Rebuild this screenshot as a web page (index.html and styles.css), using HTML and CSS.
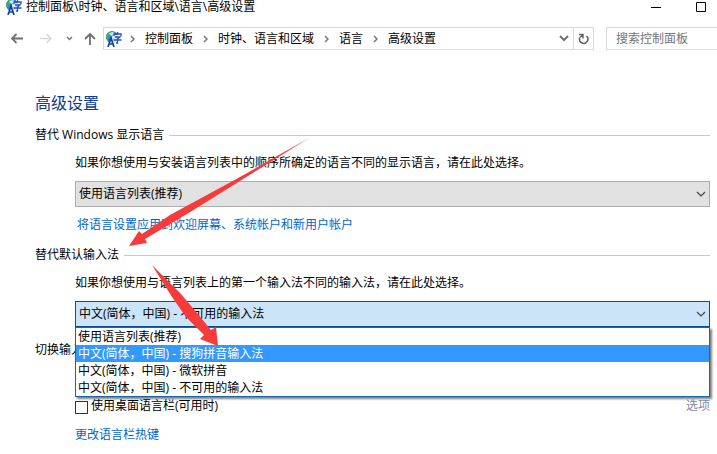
FILE: index.html
```html
<!DOCTYPE html>
<html lang="zh-CN">
<head>
<meta charset="utf-8">
<title>高级设置</title>
<link rel="stylesheet" href="styles.css">
</head>
<body>
<svg class="defs" width="0" height="0" aria-hidden="true">
  <symbol id="lang" viewBox="0 0 17 16">
    <circle cx="7" cy="6" r="6" fill="#2a86c8"/>
    <path d="M2 3 Q5 0 8 1 L7 4 L4 6 L2 9 Q0 6 2 3Z" fill="#4aa860"/>
    <path d="M4 2 L8 1 L10 3 L6 5Z" fill="#c5e8f4"/>
    <path d="M8 4 H17 V16 H3 L5 9Z" fill="#fff" opacity=".8"/>
    <path d="M3 16 L6 7 L9 16 M4 13 H8" fill="none" stroke="#183fa8" stroke-width="1.7"/>
    <path d="M12.500 1 V3 M9 5 V3 H16 V5 M10 6 H15 L12.500 8 V12 L11 12 M8.500 9 H16.500" fill="none" stroke="#2450b8" stroke-width="1.300"/>
  </symbol>
  <symbol id="down" viewBox="0 0 10 6"><path d="M1 1 L5 5 L9 1" fill="none" stroke="currentColor" stroke-width="1.200"/></symbol>
  <symbol id="right" viewBox="0 0 5 8"><path d="M1 1 L4 4 L1 7" fill="none" stroke="currentColor" stroke-width="1.500"/></symbol>
</svg>

<header class="titlebar">
  <svg class="lang"><use href="#lang"/></svg>
  <span class="caption">控制面板\时钟、语言和区域\语言\高级设置</span>
  <button class="win" aria-label="最小化"><svg width="10" height="11"><path d="M0 5.500 H10" stroke="#000"/></svg></button>
  <button class="win" aria-label="最大化"><svg width="10" height="11"><path d="M.5 .5 H9.500 V9.500 H.5Z" fill="none" stroke="#000"/></svg></button>
</header>

<nav class="toolbar">
  <div class="history">
    <button class="tool" aria-label="后退"><svg width="13" height="11"><path d="M13 5.500 H2 M6.500 1 L2 5.500 L6.500 10" fill="none" stroke="#707070" stroke-width="1.800"/></svg></button>
    <button class="tool" aria-label="前进" disabled><svg width="13" height="11"><path d="M0 5.500 H11 M6.500 1 L11 5.500 L6.500 10" fill="none" stroke="#d8d8d8" stroke-width="1.500"/></svg></button>
    <button class="tool small" aria-label="最近浏览"><svg width="7" height="5"><path d="M1 1 L3.500 3.500 L6 1" fill="none" stroke="#777" stroke-width="1.500"/></svg></button>
    <button class="tool" aria-label="上移"><svg width="12" height="13"><path d="M6 13 V2 M1 7 L6 2 L11 7" fill="none" stroke="#707070" stroke-width="1.800"/></svg></button>
  </div>
  <div class="address">
    <svg class="lang"><use href="#lang"/></svg>
    <svg class="sep"><use href="#right"/></svg><a href="#">控制面板</a>
    <svg class="sep"><use href="#right"/></svg><a href="#">时钟、语言和区域</a>
    <svg class="sep"><use href="#right"/></svg><a href="#">语言</a>
    <svg class="sep"><use href="#right"/></svg><a href="#">高级设置</a>
    <button class="drop" aria-label="历史记录"><svg width="10" height="7"><path d="M1 1 L5 5 L9 1" fill="none" stroke="#707070" stroke-width="2"/></svg></button>
    <button class="refresh" aria-label="刷新"><svg width="11" height="12"><path d="M8.500 3 A4.200 4.200 0 1 1 1.800 4.500" fill="none" stroke="#666" stroke-width="1.600"/><path d="M1 1.500 H5 V5.500 M5 1.500 L2 4.500" fill="none" stroke="#666" stroke-width="1.500"/></svg></button>
  </div>
  <input class="search" type="search" placeholder="搜索控制面板" aria-label="搜索控制面板">
</nav>

<main class="page">
  <h1>高级设置</h1>
  <section>
    <h2>替代 Windows 显示语言</h2>
    <div class="body">
      <p><label for="display">如果你想使用与安装语言列表中的顺序所确定的语言不同的显示语言，请在此处选择。</label></p>
      <div class="combo">
        <select id="display"><option>使用语言列表(推荐)</option></select>
        <svg class="arrow"><use href="#down"/></svg>
      </div>
      <a class="link apply" href="#">将语言设置应用到欢迎屏幕、系统帐户和新用户帐户</a>
    </div>
  </section>
  <section>
    <h2>替代默认输入法</h2>
    <div class="body">
      <p><label for="input">如果你想使用与语言列表上的第一个输入法不同的输入法，请在此处选择。</label></p>
      <div class="combo open">
        <select id="input"><option>中文(简体，中国) - 不可用的输入法</option></select>
        <svg class="arrow"><use href="#down"/></svg>
        <ul class="list" role="listbox" aria-label="输入法">
          <li role="option">使用语言列表(推荐)</li>
          <li role="option" class="active" aria-selected="true">中文(简体，中国) - 搜狗拼音输入法</li>
          <li role="option">中文(简体，中国) - 微软拼音</li>
          <li role="option">中文(简体，中国) - 不可用的输入法</li>
        </ul>
      </div>
    </div>
  </section>
  <section class="switching">
    <h2>切换输入</h2>
    <div class="body">
      <div class="row">
        <input type="checkbox" id="bar"><label for="bar">使用桌面语言栏(可用时)</label>
        <a class="options" href="#">选项</a>
      </div>
      <a class="link" href="#">更改语言栏热键</a>
    </div>
  </section>
</main>

<svg class="marks" width="320" height="360" aria-hidden="true">
  <path d="M309 138 L240 177 L170 215 L142 234 L139 231 L129 246 L147 243 L145 239 L187 214 L240 181Z" fill="#f73b3b"/>
  <path d="M152 265 L172 297 L186 317 L204 335 L200 339 L218 346 L216 327 L211 330 L197 313 L181 294Z" fill="#f73b3b"/>
</svg>
</body>
</html>
```
FILE: styles.css
```css
* { box-sizing: border-box; }
body {
  margin: 0;
  position: relative;
  overflow: hidden;
  background: #fff;
  color: #000;
  font: 12px/16px "Open Sans", "Noto Sans CJK SC", sans-serif;
}
button { padding: 0; border: 0; background: none; display: flex; align-items: center; justify-content: center; }
a { color: inherit; text-decoration: none; }
svg { display: block; flex: none; }
h1, h2, p, ul { margin: 0; padding: 0; font-weight: normal; }
.defs { position: absolute; }
.lang { width: 17px; height: 16px; }

.titlebar { display: flex; align-items: center; height: 14px; padding: 0 11px 0 5px; }
.caption { flex: 1; margin-left: 4px; line-height: 14px; white-space: nowrap; }
.win { width: 10px; margin-left: 35px; }

.toolbar { display: flex; align-items: center; margin-top: 13px; height: 23px; }
.history { display: flex; align-items: center; width: 103px; padding-left: 10px; gap: 17px; }
.tool { flex: none; }
.tool.small { margin: 0 -6px 0 -4px; }
.address { flex: 1; display: flex; align-items: center; height: 23px; border: 1px solid #d9d9d9; padding-left: 1px; white-space: nowrap; }
.sep { width: 5px; height: 8px; margin: 0 10px; color: #777; }
.address .lang + .sep { margin-left: 8px; }
.drop { margin-left: auto; width: 18px; }
.refresh { width: 20px; height: 21px; border-left: 1px solid #d9d9d9; }
.search { width: 111px; height: 23px; margin-left: 12px; padding: 0 9px; border: 1px solid #d9d9d9; border-right: 0; border-radius: 0; font: inherit; background: #fff; outline: 0; }
.search::placeholder { color: #757575; opacity: 1; }

.page { padding: 41px 7px 0 35px; }
h1 { font-size: 16px; line-height: 24px; color: #0b3c91; margin-bottom: 12px; }
h2 { display: flex; align-items: center; gap: 5px; font-size: 12px; line-height: 16px; }
h2::after { content: ""; flex: 1; height: 1px; background: #c8c8c8; }
.body { padding-left: 40px; }
.body p { margin: 12px 0 10px; }
.combo { position: relative; }
select { display: block; width: 100%; height: 26px; padding: 0 3px; appearance: none; border: 1px solid #adadad; border-radius: 0; background: #e1e1e1; color: #000; font: inherit; }
.open select { border-color: #0a508c; background: #cce4f7; }
.arrow { position: absolute; right: 4px; top: 10px; width: 10px; height: 6px; color: #444; }
.link { display: block; color: #0066cc; }
.apply { margin: 10px 0 14px; padding-left: 2px; }
.list { position: absolute; left: 0; right: 0; top: 26px; z-index: 1; border: 1px solid #1767a8; background: #fff; list-style: none; box-shadow: 2px 2px 2px rgba(0, 0, 0, .5); }
.list li { height: 17px; padding-left: 2px; line-height: 17px; }
.list .active { background: #3399ff; color: #fff; }
.switching { margin-top: 15px; }
.row { display: flex; align-items: center; margin: 40px 0 13px; }
.row input { appearance: none; width: 13px; height: 13px; margin: 3px 3px 0 0; border: 1px solid #333; background: #fff; }
.options { margin-left: auto; color: #838b98; }
.marks { position: absolute; left: 0; top: 0; z-index: 2; pointer-events: none; }
```
